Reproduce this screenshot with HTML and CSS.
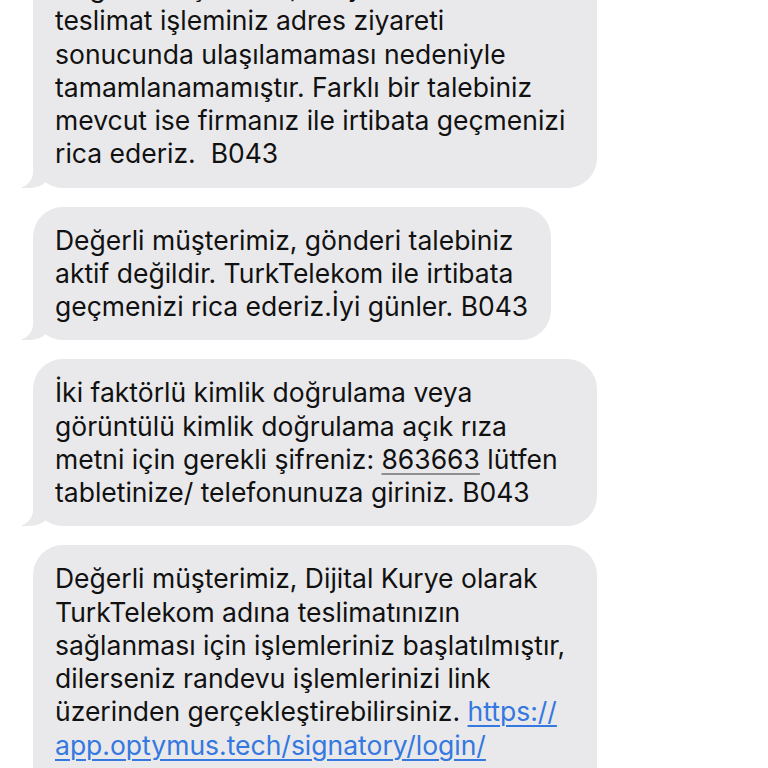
FILE: index.html
```html
<!DOCTYPE html>
<html lang="tr">
<head>
<meta charset="utf-8">
<link rel="stylesheet" href="styles.css">
</head>
<body>
<div class="thread">
  <div class="bubble">Değerli müşterimiz, Kuryemiz ile<br>teslimat işleminiz adres ziyareti<br>sonucunda ulaşılamaması nedeniyle<br>tamamlanamamıştır. Farklı bir talebiniz<br>mevcut ise firmanız ile irtibata geçmenizi<br>rica ederiz.&nbsp; B043</div>
  <div class="bubble bubble-short">Değerli müşterimiz, gönderi talebiniz<br>aktif değildir. TurkTelekom ile irtibata<br>geçmenizi rica ederiz.İyi günler. B043</div>
  <div class="bubble">İki faktörlü kimlik doğrulama veya<br>görüntülü kimlik doğrulama açık rıza<br>metni için gerekli şifreniz: <span class="code">863663</span> lütfen<br>tabletinize/ telefonunuza giriniz. B043</div>
  <div class="bubble">Değerli müşterimiz, Dijital Kurye olarak<br>TurkTelekom adına teslimatınızın<br>sağlanması için işlemleriniz başlatılmıştır,<br>dilerseniz randevu işlemlerinizi link<br>üzerinden gerçekleştirebilirsiniz. <span class="link">https://</span><br><span class="link">app.optymus.tech/signatory/login/</span><br><span class="link">810750d9-d0c4a-7098-80a9-6</span></div>
</div>
</body>
</html>
```
FILE: styles.css
```css
html, body {
  margin: 0;
  padding: 0;
  background: #ffffff;
}
body {
  width: 768px;
  height: 768px;
  overflow: hidden;
}
.thread {
  display: flex;
  flex-direction: column;
  align-items: flex-start;
  gap: 19px;
  padding-left: 33px;
  margin-top: -46px;
}
.bubble {
  position: relative;
  box-sizing: border-box;
  width: 564px;
  padding: 17px 20px 17px 22px;
  background: #e9e9eb;
  border-radius: 30px;
  font-family: Inter, "Noto Sans", sans-serif;
  font-size: 26.5px;
  line-height: 33.25px;
  color: #111111;
  white-space: nowrap;
}
.bubble-short {
  width: 518px;
}
.bubble::before {
  content: "";
  position: absolute;
  bottom: 0;
  left: -11px;
  width: 32px;
  height: 30px;
  background: #e9e9eb;
  border-bottom-right-radius: 24px;
  z-index: 0;
}
.bubble::after {
  content: "";
  position: absolute;
  bottom: 0;
  left: -42px;
  width: 42px;
  height: 30px;
  background: #ffffff;
  border-bottom-right-radius: 16px;
  z-index: 0;
}
.code {
  text-decoration: underline;
  text-decoration-color: #8e8e93;
  text-underline-offset: 4px;
  text-decoration-thickness: 1.5px;
}
.link {
  color: #3478e0;
  text-decoration: underline;
  text-underline-offset: 4px;
  text-decoration-thickness: 1.5px;
}
```
